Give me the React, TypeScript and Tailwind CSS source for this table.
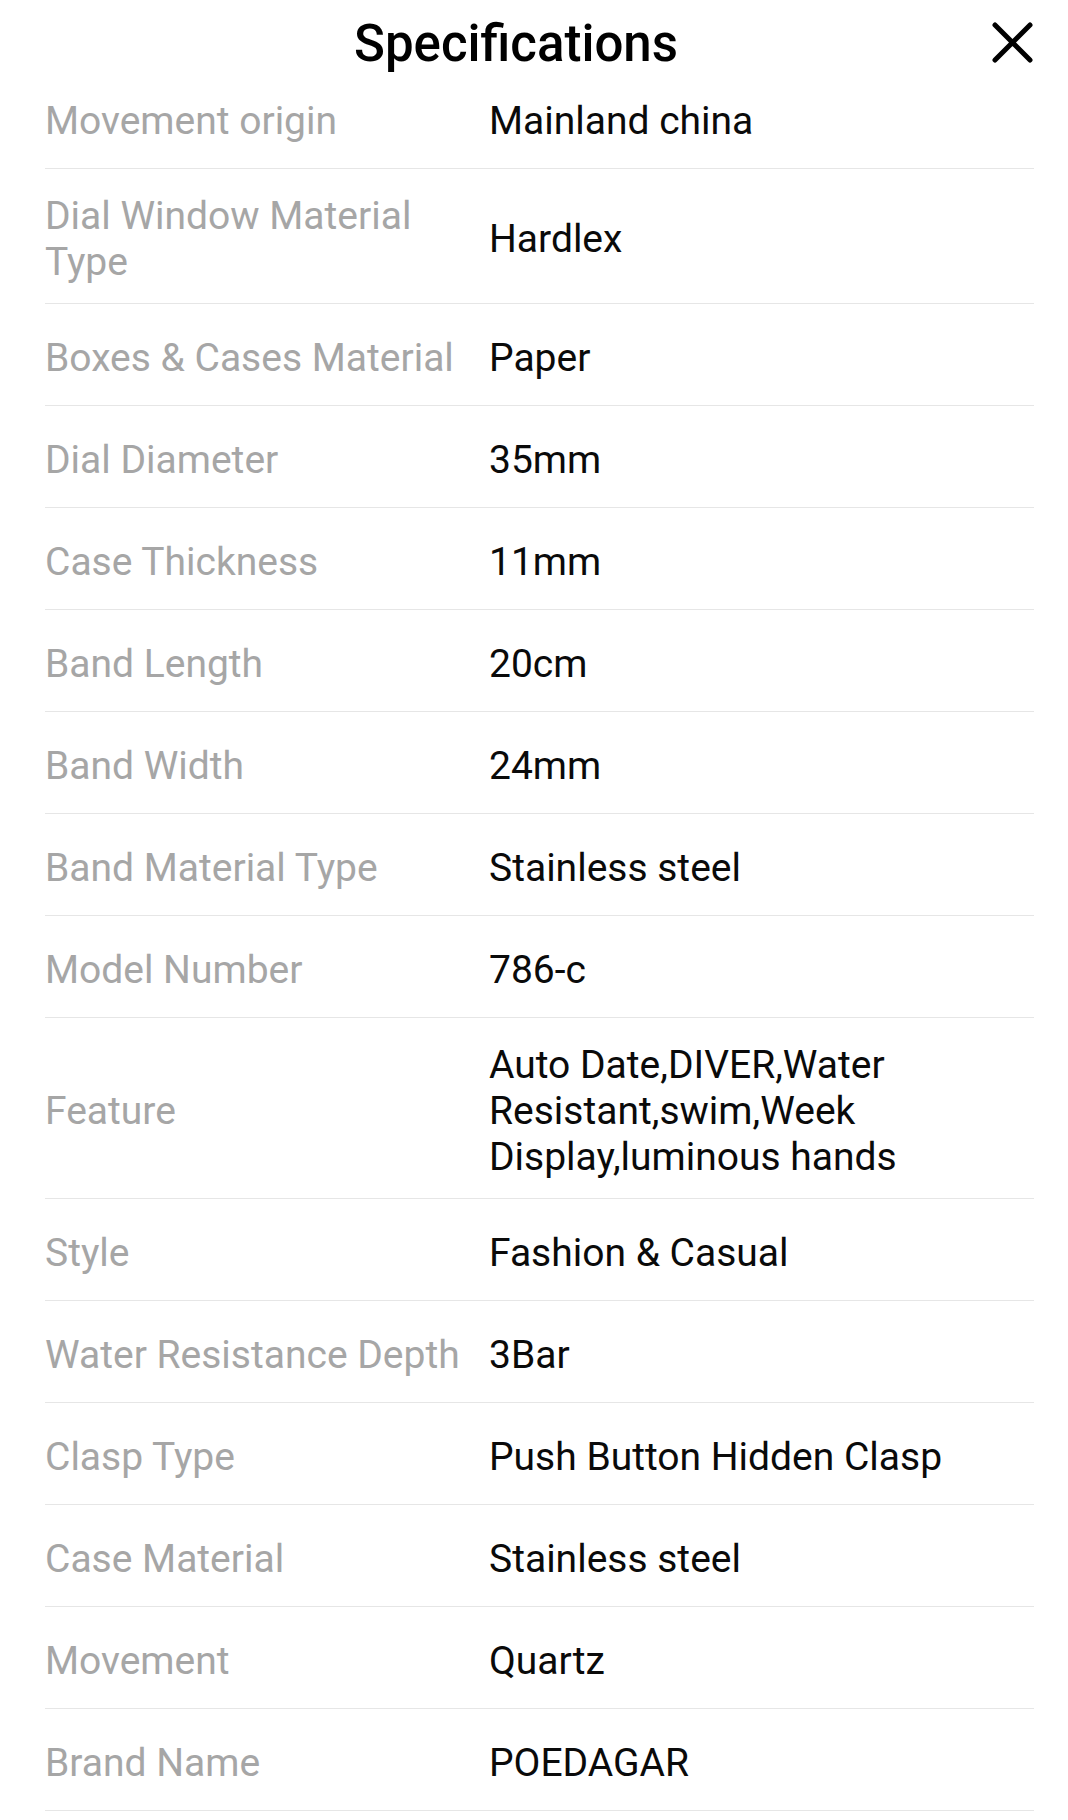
const SPECS: [string, string][] = [
  ["Movement origin", "Mainland china"],
  ["Dial Window Material Type", "Hardlex"],
  ["Boxes & Cases Material", "Paper"],
  ["Dial Diameter", "35mm"],
  ["Case Thickness", "11mm"],
  ["Band Length", "20cm"],
  ["Band Width", "24mm"],
  ["Band Material Type", "Stainless steel"],
  ["Model Number", "786-c"],
  ["Feature", "Auto Date,DIVER,Water Resistant,swim,Week Display,luminous hands"],
  ["Style", "Fashion & Casual"],
  ["Water Resistance Depth", "3Bar"],
  ["Clasp Type", "Push Button Hidden Clasp"],
  ["Case Material", "Stainless steel"],
  ["Movement", "Quartz"],
  ["Brand Name", "POEDAGAR"],
];

export default function App() {
  return (
    <div className="w-[1068px] min-h-[1820px] bg-white font-['Roboto','Noto_Sans',sans-serif]">
      {/* Header — title sits centred in the space left of the close button */}
      <div className="relative h-[67px] pt-[18px] pr-[36px]">
        <h1 className="text-center text-[51px] leading-none font-medium text-black">
          Specifications
        </h1>
        <button className="absolute right-[35px] top-[22px] w-[41px] h-[41px]" aria-label="Close">
          <svg viewBox="0 0 41 41" width="41" height="41">
            <path d="M3 3 L38 38 M38 3 L3 38" stroke="#000" strokeWidth="5" strokeLinecap="round" fill="none" />
          </svg>
        </button>
      </div>

      {/* Spec rows */}
      <div className="ml-[45px] mr-[34px]">
        {SPECS.map(([label, value]) => (
          <div
            key={label}
            className="flex items-center min-h-[102px] pt-[24px] pb-[18px] border-b border-[#e6e6e6] text-[39px] leading-[46px]"
          >
            <div className="w-[444px] shrink-0 pr-[14px] text-[#a6a6a6]">{label}</div>
            <div className="flex-1 text-[#0a0a0a]">{value}</div>
          </div>
        ))}
      </div>
    </div>
  );
}
